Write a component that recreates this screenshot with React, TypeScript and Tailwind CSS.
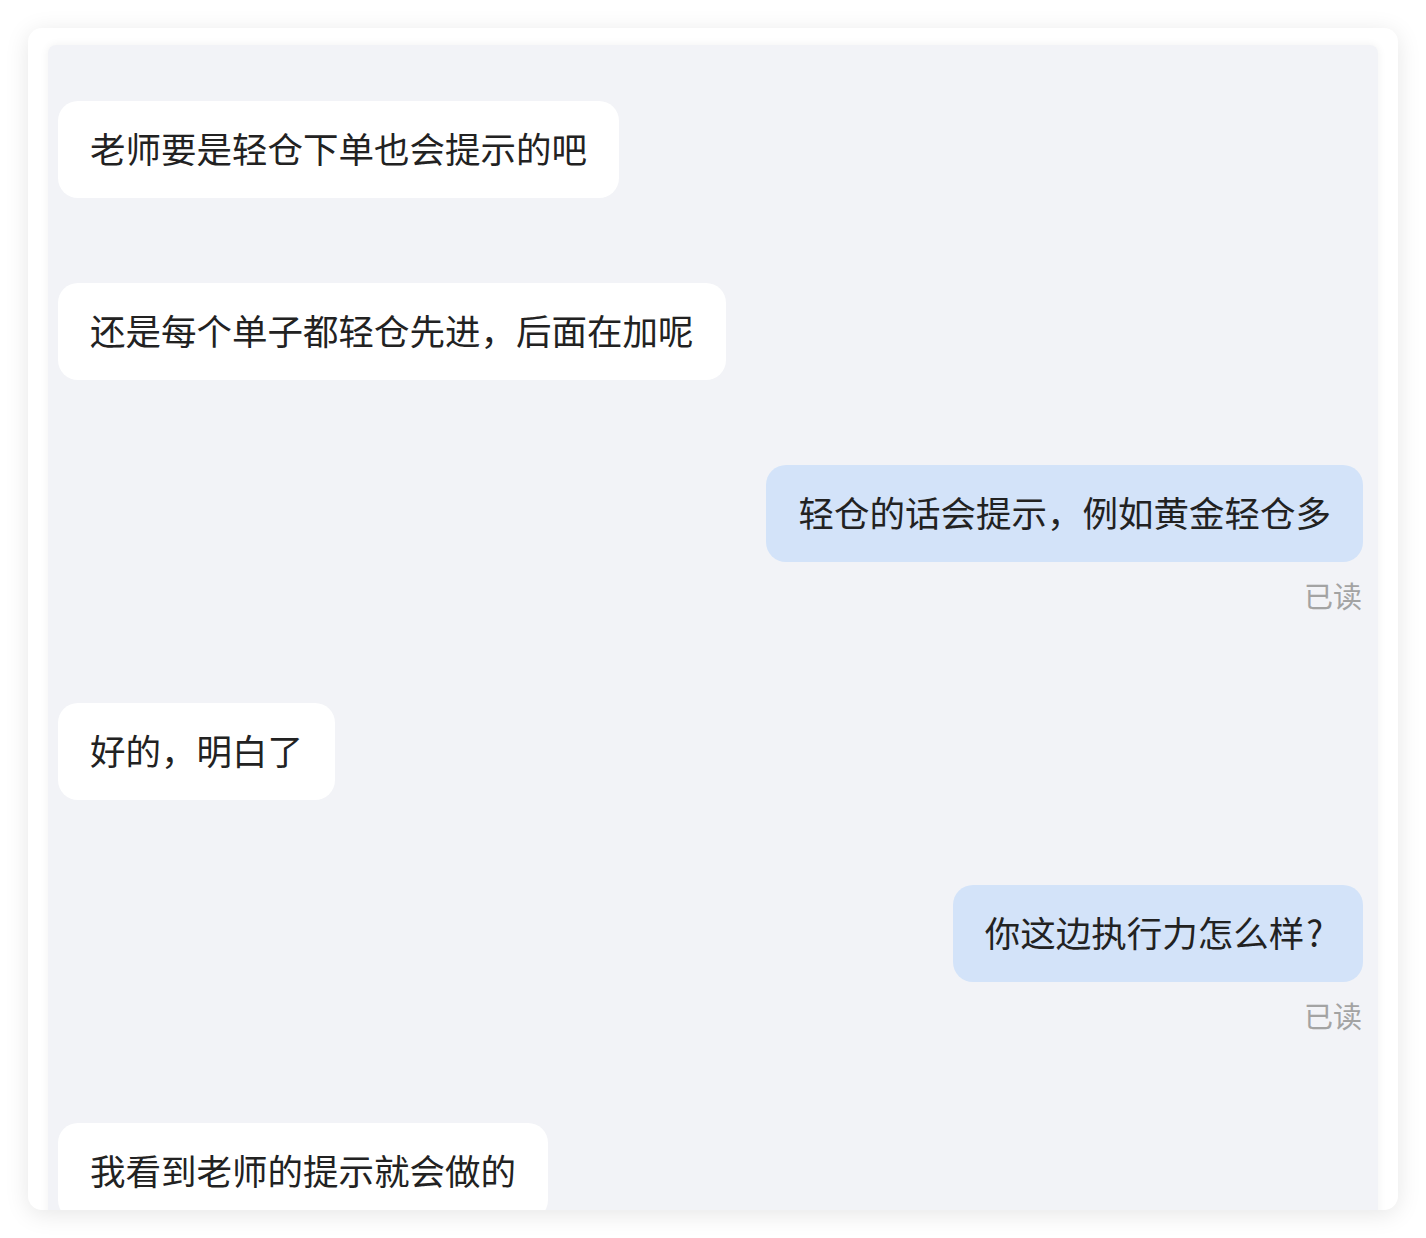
type Msg = { text: string; tail?: string; mine?: boolean; read?: boolean };

const messages: Msg[] = [
  { text: "老师要是轻仓下单也会提示的吧" },
  { text: "还是每个单子都轻仓先进，后面在加呢" },
  { text: "轻仓的话会提示，例如黄金轻仓多", mine: true, read: true },
  { text: "好的，明白了" },
  { text: "你这边执行力怎么样", tail: "?", mine: true, read: true },
  { text: "我看到老师的提示就会做的" },
];

const font = {
  fontFamily: '"Noto Sans CJK SC", "Noto Sans", sans-serif',
};

function Bubble({ msg }: { msg: Msg }) {
  return (
    <div className={msg.mine ? "flex flex-col items-end" : "flex flex-col items-start"}>
      <div
        className={
          msg.mine
            ? "rounded-[20px] bg-[#d3e3f9] px-[32px] pt-[26px] pb-[30px] text-[35.5px] leading-[41px] text-[#222222]"
            : "rounded-[20px] bg-white px-[32px] pt-[26px] pb-[30px] text-[35.5px] leading-[41px] text-[#222222]"
        }
      >
        {msg.text}
        {msg.tail && <span className="pl-[2px] pr-[8px]">{msg.tail}</span>}
      </div>
      {msg.read && (
        <div className="mt-[16px] pb-[6px] pr-px text-[29px] leading-[34px] text-[#a3a3a3]">
          已读
        </div>
      )}
    </div>
  );
}

export default function App() {
  return (
    <div className="min-h-[1238px] bg-white pl-[28px] pr-[28px] pt-[28px]" style={font}>
      <div className="h-[1182px] overflow-hidden rounded-[14px] bg-white shadow-[0_4px_24px_rgba(0,0,0,0.1)]">
        <div className="ml-[20px] mr-[20px] mt-[17px] h-[1300px] rounded-[8px] bg-[#f2f3f7] shadow-[0_0_10px_rgba(0,0,0,0.06)]">
          <div className="flex flex-col gap-[85px] pl-[10px] pr-[15px] pt-[56px]">
            {messages.map((m, i) => (
              <Bubble key={i} msg={m} />
            ))}
          </div>
        </div>
      </div>
    </div>
  );
}
